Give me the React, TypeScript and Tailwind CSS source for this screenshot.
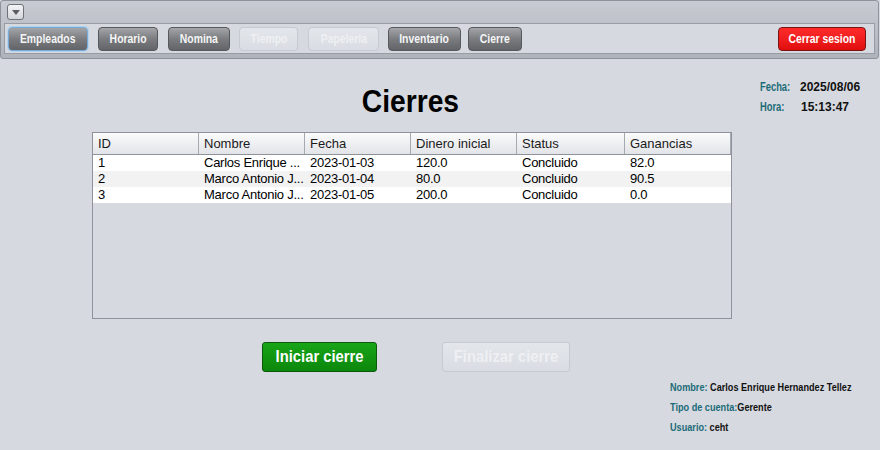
import React from "react";

const sans = { fontFamily: '"Liberation Sans", Arial, sans-serif' };

function NavBtn({ label, w, active, disabled, className = "" }: { label: string; w: number; active?: boolean; disabled?: boolean; className?: string }) {
  const base = "h-[24px] rounded-[4px] border text-[13px] font-bold flex items-center justify-center whitespace-nowrap";
  const look = disabled
    ? "border-[#c6cad1] bg-gradient-to-b from-[#e3e6eb] to-[#d9dce2] text-[#eef0f3]"
    : `${active ? "border-[#74abd8] shadow-[0_0_0_1px_#b3d3ec]" : "border-[#55585d]"} bg-gradient-to-b from-[#a3a5a8] via-[#7a7c7f] to-[#626467] text-[#f4f5f6]`;
  return (
    <div style={{ width: w, ...sans }} className={`${base} ${look} ${className}`}>
      <span className="inline-block scale-x-[0.8]">{label}</span>
    </div>
  );
}

const cols = [
  { h: "ID", w: 106 },
  { h: "Nombre", w: 106 },
  { h: "Fecha", w: 106 },
  { h: "Dinero inicial", w: 106 },
  { h: "Status", w: 108 },
  { h: "Ganancias", w: 106 },
];

const rows = [
  ["1", "Carlos Enrique ...", "2023-01-03", "120.0", "Concluido", "82.0"],
  ["2", "Marco Antonio J...", "2023-01-04", "80.0", "Concluido", "90.5"],
  ["3", "Marco Antonio J...", "2023-01-05", "200.0", "Concluido", "0.0"],
];

export default function App() {
  return (
    <div className="w-[880px] h-[450px] bg-[#d6d9df] relative overflow-hidden" style={sans}>
      {/* top panel */}
      <div className="w-[879px] h-[59px] border border-[#8e939b] rounded-[3px] bg-gradient-to-b from-[#c8cbd1] to-[#afb3ba] flex flex-col">
        <div className="h-[22px] pl-[6px] pt-[3px]">
          <div className="w-[17px] h-[16px] rounded-[3px] border border-[#6d7178] bg-gradient-to-b from-[#f3f4f6] to-[#d3d6db] flex items-center justify-center">
            <svg width="8" height="5" viewBox="0 0 8 5"><path d="M0 0 L8 0 L4 5 Z" fill="#5a5e64" /></svg>
          </div>
        </div>
        <div className="mx-[3px] h-[31px] border border-[#979ca4] bg-[#d6d9df] flex items-center pl-[3px] pr-[8px]">
          <NavBtn label="Empleados" w={80} active />
          <NavBtn label="Horario" w={60} className="ml-[10px]" />
          <NavBtn label="Nomina" w={62} className="ml-[10px]" />
          <NavBtn label="Tiempo" w={59} disabled className="ml-[9px]" />
          <NavBtn label="Papeleria" w={71} disabled className="ml-[10px]" />
          <NavBtn label="Inventario" w={73} className="ml-[9px]" />
          <NavBtn label="Cierre" w={54} className="ml-[7px]" />
          <div className="ml-auto">
            <div className="w-[88px] h-[24px] rounded-[4px] border border-[#7a1414] bg-gradient-to-b from-[#ff2b2b] to-[#e00c0c] text-white text-[13px] font-bold flex items-center justify-center whitespace-nowrap">
              <span className="inline-block scale-x-[0.8]">Cerrar sesion</span>
            </div>
          </div>
        </div>
      </div>

      {/* Fecha / Hora */}
      <div className="absolute left-[760px] top-[77px] text-[12px] font-bold leading-[20px]">
        <div className="flex whitespace-nowrap">
          <span className="w-[40px] text-[#1c6b78]"><span className="inline-block origin-left scale-x-[0.78]">Fecha:</span></span>
          <span className="text-[#111]">2025/08/06</span>
        </div>
        <div className="flex whitespace-nowrap">
          <span className="w-[41px] text-[#1c6b78]"><span className="inline-block origin-left scale-x-[0.78]">Hora:</span></span>
          <span className="text-[#111]">15:13:47</span>
        </div>
      </div>

      {/* title */}
      <div className="h-[60px] mt-[12px] flex items-center justify-center w-[820px]">
        <span className="inline-block text-[31px] font-bold text-black leading-none scale-x-[0.91]">Cierres</span>
      </div>

      {/* table */}
      <div className="ml-[92px] mt-[1px] w-[640px] h-[187px] border border-[#8e939b] bg-[#d6d9df]">
        <div className="flex h-[22px] border-b border-[#8e939b] bg-gradient-to-b from-[#fbfbfc] to-[#e2e4e8]">
          {cols.map((c) => (
            <div
              key={c.h}
              style={{ width: c.w }}
              className="h-full flex items-center pl-[5px] text-[13px] text-[#1a1a1a] border-r border-[#a5a9b0]"
            >
              {c.h}
            </div>
          ))}
        </div>
        {rows.map((r, ri) => (
          <div key={ri} className={`flex h-[16px] ${ri === 1 ? "bg-[#f2f2f2]" : "bg-white"}`}>
            {r.map((v, ci) => (
              <div key={ci} style={{ width: cols[ci].w }} className="pl-[5px] text-[13px] leading-[16px] text-black whitespace-nowrap overflow-hidden tracking-[-0.25px]">
                {v}
              </div>
            ))}
          </div>
        ))}
      </div>

      {/* action buttons */}
      <div className="flex mt-[23px]">
        <div className="ml-[262px] w-[115px] h-[30px] rounded-[3px] border border-[#0b5a0b] bg-gradient-to-b from-[#18a518] to-[#0b870b] text-white text-[17px] font-bold flex items-center justify-center whitespace-nowrap">
          <span className="inline-block scale-x-[0.87]">Iniciar cierre</span>
        </div>
        <div className="ml-[65px] w-[128px] h-[30px] rounded-[3px] border border-[#c6cad1] bg-gradient-to-b from-[#e3e6eb] to-[#d9dce2] text-[#eef0f3] text-[17px] font-bold flex items-center justify-center whitespace-nowrap">
          <span className="inline-block scale-x-[0.87]">Finalizar cierre</span>
        </div>
      </div>

      {/* user info */}
      <div className="ml-[670px] mt-[5px] text-[11px] font-bold leading-[20px] whitespace-nowrap">
        <div><span className="inline-block origin-left scale-x-[0.83]"><span className="text-[#1c6b78]">Nombre:</span><span className="text-[#111]"> Carlos Enrique Hernandez Tellez</span></span></div>
        <div><span className="inline-block origin-left scale-x-[0.83]"><span className="text-[#1c6b78]">Tipo de cuenta:</span><span className="text-[#111]">Gerente</span></span></div>
        <div><span className="inline-block origin-left scale-x-[0.83]"><span className="text-[#1c6b78]">Usuario:</span><span className="text-[#111]"> ceht</span></span></div>
      </div>
    </div>
  );
}
